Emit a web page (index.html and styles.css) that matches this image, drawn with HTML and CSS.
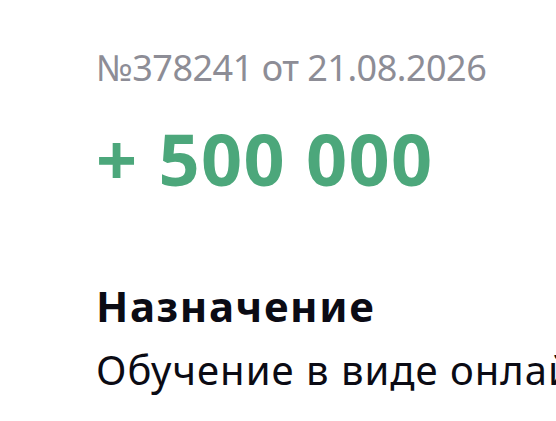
FILE: index.html
```html
<!DOCTYPE html>
<html lang="ru">
<head>
<meta charset="utf-8">
<link rel="stylesheet" href="styles.css">
</head>
<body>
<main class="page">
  <div class="meta">№378241 от 21.08.2026</div>
  <div class="amount">+ 500 000</div>
  <section class="purpose">
    <h2 class="label">Назначение</h2>
    <p class="value">Обучение в виде онлайн-курса по программированию</p>
  </section>
</main>
</body>
</html>
```
FILE: styles.css
```css
html, body {
  margin: 0;
  padding: 0;
  background: #ffffff;
  overflow: hidden;
}
.page {
  font-family: "Noto Sans", "Open Sans", sans-serif;
  padding: 42px 0 0 96px;
  white-space: nowrap;
}
.meta {
  font-size: 36px;
  letter-spacing: -0.5px;
  color: #8d8d96;
  line-height: 52px;
}
.amount {
  margin-top: 24px;
  font-size: 72px;
  letter-spacing: 1.3px;
  font-weight: 700;
  color: #4ca77b;
  line-height: 80px;
}
.purpose {
  margin-top: 80px;
}
.label {
  margin: 0;
  font-size: 42px;
  letter-spacing: 1.6px;
  font-weight: 700;
  color: #0b0b14;
  line-height: 56px;
}
.value {
  margin: 8px 0 0;
  font-size: 40px;
  letter-spacing: 1px;
  color: #0b0b14;
  line-height: 56px;
}
```
